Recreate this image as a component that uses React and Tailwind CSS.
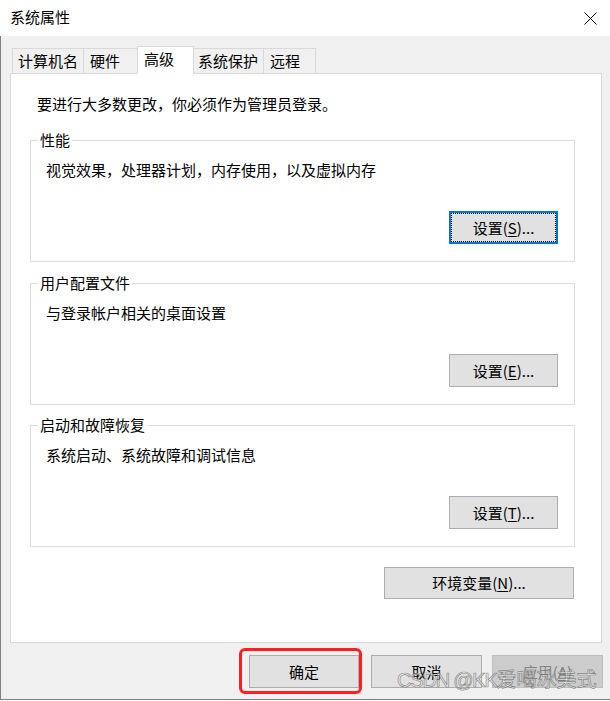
import React from "react";

const FONT = { fontFamily: '"Noto Sans CJK SC", "Microsoft YaHei", sans-serif' };

function Btn({ children, className = "", focused = false, disabled = false }) {
  if (focused) {
    return (
      <div className={`flex items-center justify-center border-2 border-[#0078d7] bg-[#e1e1e1] ${className}`}>
        <div className="flex h-full w-full items-center justify-center border border-dotted border-black">
          <span className="text-[15px] leading-[20px] text-black">{children}</span>
        </div>
      </div>
    );
  }
  return (
    <div
      className={`flex items-center justify-center border ${
        disabled ? "border-[#bfbfbf] bg-[#cccccc] text-[#838383]" : "border-[#adadad] bg-[#e1e1e1] text-black"
      } ${className}`}
    >
      <span className="text-[15px] leading-[20px]">{children}</span>
    </div>
  );
}

function Group({ label, desc, btn, mt, focused }) {
  return (
    <div className={`relative ml-[19px] mr-[26px] h-[122px] border border-[#dcdcdc] ${mt}`}>
      <div className="absolute left-[7px] top-[-11px] bg-white px-[2px] text-[15px] leading-[20px] text-black">
        {label}
      </div>
      <div className="pl-[15px] pt-[19px] text-[15px] leading-[20px] text-black">{desc}</div>
      <div className="mt-[31px] flex justify-end pr-[16px]">
        <Btn className="h-[33px] w-[109px]" focused={focused}>
          {btn}
        </Btn>
      </div>
    </div>
  );
}

const tabBase = "-ml-px flex items-center border border-b-0 border-[#d9d9d9] text-[15px] leading-[20px] text-black";

export default function App() {
  return (
    <div className="relative h-[701px] w-[610px] overflow-hidden bg-white" style={FONT}>
      {/* Title bar */}
      <div className="flex h-[36px] items-center justify-between pb-[2px] pl-[10px] pr-[13px]">
        <span className="text-[15px] leading-[20px] text-black">系统属性</span>
        <svg width="13" height="13" viewBox="0 0 13 13" className="mt-[2px]">
          <path d="M0.5 0.5 L12.5 12.5 M12.5 0.5 L0.5 12.5" stroke="#000" strokeWidth="1" fill="none" />
        </svg>
      </div>

      {/* Body */}
      <div className="h-[664px] border-b border-l border-[#7f7f7f] bg-[#f0f0f0] pl-[9px] pt-[10px]">
        {/* Tabs */}
        <div className="flex h-[27px] items-end pl-[3px]">
          <div className={`${tabBase} h-[25px] w-[72px] bg-[#f0f0f0] pl-[5px]`}>计算机名</div>
          <div className={`${tabBase} h-[25px] w-[55px] bg-[#f0f0f0] pl-[6px]`}>硬件</div>
          <div className={`${tabBase} relative z-10 -mb-px h-[28px] w-[57px] bg-white pb-[3px] pl-[6px]`}>高级</div>
          <div className={`${tabBase} h-[25px] w-[71px] bg-[#f0f0f0] pl-[4px]`}>系统保护</div>
          <div className={`${tabBase} h-[25px] w-[53px] bg-[#f0f0f0] pl-[6px]`}>远程</div>
        </div>

        {/* Panel */}
        <div className="h-[570px] w-[592px] border border-[#d9d9d9] bg-white">
          <div className="pl-[26px] pt-[20px] text-[15px] leading-[20px] text-black">
            要进行大多数更改，你必须作为管理员登录。
          </div>
          <Group
            mt="mt-[26px]"
            label="性能"
            desc="视觉效果，处理器计划，内存使用，以及虚拟内存"
            focused
            btn={
              <>
                设置(<u className="underline-offset-2">S</u>)...
              </>
            }
          />
          <Group
            mt="mt-[21px]"
            label="用户配置文件"
            desc="与登录帐户相关的桌面设置"
            btn={
              <>
                设置(<u className="underline-offset-2">E</u>)...
              </>
            }
          />
          <Group
            mt="mt-[20px]"
            label="启动和故障恢复"
            desc="系统启动、系统故障和调试信息"
            btn={
              <>
                设置(<u className="underline-offset-2">T</u>)...
              </>
            }
          />
          <div className="mt-[20px] flex justify-end pr-[27px]">
            <Btn className="h-[32px] w-[190px]">
              环境变量(<u className="underline-offset-2">N</u>)...
            </Btn>
          </div>
        </div>

        {/* Bottom buttons */}
        <div className="mt-[12px] flex pl-[239px]">
          <Btn className="h-[33px] w-[110px]">确定</Btn>
          <Btn className="ml-[12px] h-[33px] w-[111px]">取消</Btn>
          <Btn className="ml-[10px] h-[33px] w-[111px]" disabled>
            应用(<u className="underline-offset-2">A</u>)
          </Btn>
        </div>
      </div>

      {/* Red highlight */}
      <div className="pointer-events-none absolute left-[239px] top-[648px] h-[46px] w-[123px] rounded-[6px] border-[3px] border-[#ff1f1f]" />

      {/* Watermark */}
      <div
        className="pointer-events-none absolute left-[397px] top-[667px] whitespace-nowrap text-[20px] leading-[26px] text-[rgba(255,255,255,0.55)] [-webkit-text-stroke:0.7px_rgba(110,110,110,0.8)]"
        style={{ fontFamily: '"Liberation Sans", "Noto Sans CJK SC", sans-serif' }}
      >
        <span className="tracking-[-1.2px]">CSDN @KK</span>
        <span>爱喝冰美式</span>
      </div>
    </div>
  );
}
